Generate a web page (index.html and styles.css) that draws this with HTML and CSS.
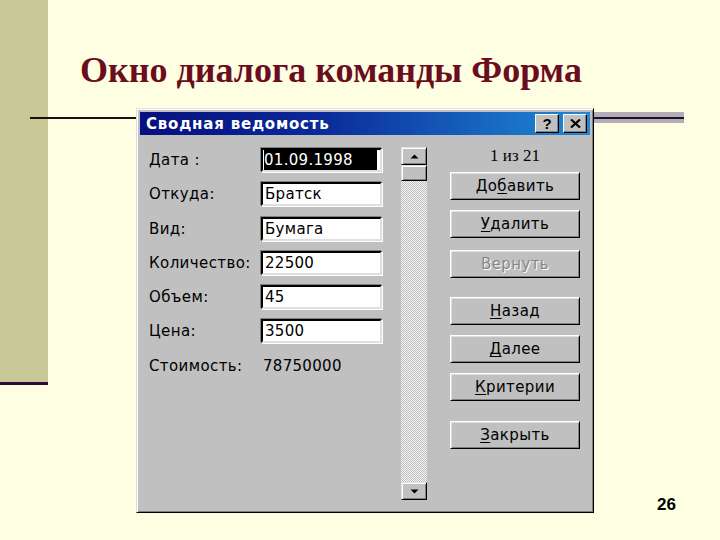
FILE: index.html
```html
<!DOCTYPE html>
<html lang="ru">
<head>
<meta charset="utf-8">
<title>Окно диалога команды Форма</title>
<link rel="stylesheet" href="styles.css">
</head>
<body>
<div class="slide">
  <header class="head">
    <h1 class="title">Окно диалога команды Форма</h1>
  </header>
  <div class="stage">
    <div class="rule-left"></div>
    <div class="dialog">
      <div class="titlebar">
        <span class="caption">Сводная ведомость</span>
        <div class="tb-buttons">
          <span class="tb-btn">?</span>
          <span class="tb-btn">
            <svg width="11" height="9" viewBox="0 0 11 9"><path d="M1 0.5 L10 8.5 M10 0.5 L1 8.5" stroke="#000" stroke-width="2.2" fill="none"/></svg>
          </span>
        </div>
      </div>
      <div class="dlg-body">
        <div class="fields">
          <span class="lbl">Дата :</span>
          <div class="field"><span class="sel">01.09.1998</span></div>
          <span class="lbl">Откуда:</span>
          <div class="field">Братск</div>
          <span class="lbl">Вид:</span>
          <div class="field">Бумага</div>
          <span class="lbl">Количество:</span>
          <div class="field">22500</div>
          <span class="lbl">Объем:</span>
          <div class="field">45</div>
          <span class="lbl">Цена:</span>
          <div class="field">3500</div>
          <span class="lbl">Стоимость:</span>
          <span class="value">78750000</span>
        </div>
        <div class="scrollbar">
          <div class="sb-btn"><svg width="9" height="5" viewBox="0 0 9 5"><path d="M4.5 0.5 L8.5 4.5 L0.5 4.5 Z" fill="#000"/></svg></div>
          <div class="sb-thumb"></div>
          <div class="sb-track"></div>
          <div class="sb-btn"><svg width="9" height="5" viewBox="0 0 9 5"><path d="M0.5 0.5 L8.5 0.5 L4.5 4.5 Z" fill="#000"/></svg></div>
        </div>
        <div class="actions">
          <div class="counter">1 из 21</div>
          <div class="btn">До<u>б</u>авить</div>
          <div class="btn"><u>У</u>далить</div>
          <div class="btn disabled sep-s">Вернуть</div>
          <div class="btn sep-l"><u>Н</u>азад</div>
          <div class="btn"><u>Д</u>алее</div>
          <div class="btn"><u>К</u>ритерии</div>
          <div class="btn sep-l"><u>З</u>акрыть</div>
        </div>
      </div>
    </div>
    <div class="rule-right">
      <div class="band"></div>
      <div class="page-num">26</div>
    </div>
  </div>
</div>
</body>
</html>
```
FILE: styles.css
```css
* { box-sizing: border-box; }
html, body { margin: 0; padding: 0; }
body { background: #fefee2; }

.slide {
  width: 720px;
  height: 540px;
  overflow: hidden;
  background:
    linear-gradient(#2d0a35, #2d0a35) 0 382px / 48px 3px no-repeat,
    linear-gradient(#c8c896, #c8c896) 0 0 / 48px 382px no-repeat,
    #fefee2;
  font-family: "DejaVu Sans", sans-serif;
}

.head { height: 108px; }
.title {
  margin: 0;
  padding: 52px 0 0 80px;
  font-family: "Liberation Serif", "Times New Roman", serif;
  font-weight: bold;
  font-size: 36px;
  line-height: 36px;
  color: #6b0d1e;
  white-space: nowrap;
}

.stage {
  display: flex;
  align-items: flex-start;
  margin-left: 30px;
}
.rule-left {
  width: 106px;
  height: 2px;
  margin-top: 9px;
  background: #1b0d12;
}

.dialog {
  width: 458px;
  height: 405px;
  background: #c0c0c0;
  border: 1px solid;
  border-color: #dfdfdf #000 #000 #dfdfdf;
  box-shadow: inset 1px 1px #fff, inset -1px -1px #808080;
  padding: 3px;
}

.titlebar {
  height: 23px;
  display: flex;
  align-items: center;
  justify-content: space-between;
  padding: 0 3px 0 6px;
  background: linear-gradient(to right, #06107e 0%, #0a2a98 40%, #1a74c8 85%, #2288d4 100%);
}
.caption {
  color: #fff;
  font-weight: bold;
  font-size: 15px;
  letter-spacing: 0.8px;
  white-space: nowrap;
}
.tb-buttons { display: flex; gap: 4px; }
.tb-btn {
  width: 24px;
  height: 19px;
  display: flex;
  align-items: center;
  justify-content: center;
  background: #c0c0c0;
  border: 1px solid;
  border-color: #fff #000 #000 #fff;
  box-shadow: inset -1px -1px #808080;
  font-family: "Liberation Sans", Arial, sans-serif;
  font-weight: bold;
  font-size: 15px;
  color: #000;
}

.dlg-body {
  display: flex;
  align-items: flex-start;
  padding: 13px 0 0 9px;
}

.fields {
  display: grid;
  grid-template-columns: 112px 121px;
  grid-auto-rows: 24px;
  row-gap: 10.3px;
  font-size: 15px;
  color: #000;
}
.lbl { align-self: center; white-space: nowrap; letter-spacing: 0.4px; }
.value { align-self: center; padding-left: 2px; letter-spacing: 0.3px; }
.field {
  background: #fff;
  border: 2px solid;
  border-color: #000 #dfdfdf #dfdfdf #000;
  box-shadow: -1px -1px #808080, 1px 1px #fff;
  padding: 0 2px;
  line-height: 20px;
  white-space: nowrap;
  letter-spacing: 0.3px;
}
.sel {
  display: block;
  margin: 0 1px 0 -1px;
  background: #000;
  color: #fff;
}

.scrollbar {
  width: 26px;
  height: 353px;
  margin: -1px 0 0 19px;
  display: flex;
  flex-direction: column;
  background: repeating-conic-gradient(#f4f4f4 0 25%, #c0c0c0 0 50%) 0 0 / 2px 2px;
}
.sb-btn, .sb-thumb {
  height: 18px;
  display: flex;
  align-items: center;
  justify-content: center;
  background: #c0c0c0;
  border: 1px solid;
  border-color: #dfdfdf #000 #000 #dfdfdf;
  box-shadow: inset 1px 1px #fff, inset -1px -1px #808080;
}
.sb-thumb { height: 16px; }
.sb-track { flex: 1; }

.actions {
  width: 130px;
  margin: -1px 0 0 23px;
  display: flex;
  flex-direction: column;
  gap: 10px;
}
.counter {
  height: 18px;
  line-height: 18px;
  margin-bottom: -3px;
  text-align: center;
  font-family: "Liberation Serif", "Times New Roman", serif;
  font-size: 17px;
  color: #000;
}
.btn {
  height: 28px;
  display: flex;
  align-items: center;
  justify-content: center;
  background: #c0c0c0;
  border: 1px solid;
  border-color: #fff #000 #000 #fff;
  box-shadow: inset 1px 1px #dfdfdf, inset -1px -1px #808080;
  font-size: 15px;
  letter-spacing: 0.4px;
  color: #000;
}
.btn u { text-decoration-thickness: 1px; text-underline-offset: 2px; }
.btn.disabled { color: #888; text-shadow: 1px 1px #fff; }
.sep-s { margin-top: 2px; }
.sep-l { margin-top: 9px; }
.sep-l:last-child { margin-top: 10px; }

.rule-right {
  width: 90px;
  height: 405px;
  display: flex;
  flex-direction: column;
  justify-content: space-between;
}
.band {
  height: 11px;
  margin-top: 4px;
  background: linear-gradient(#b5adb5 0 5px, #1e1030 5px 7px, #b5adb5 7px);
}
.page-num {
  text-align: right;
  padding-right: 8px;
  margin-bottom: -2px;
  line-height: 20px;
  font-family: "Liberation Sans", Arial, sans-serif;
  font-weight: bold;
  font-size: 17px;
  color: #000;
}
```
